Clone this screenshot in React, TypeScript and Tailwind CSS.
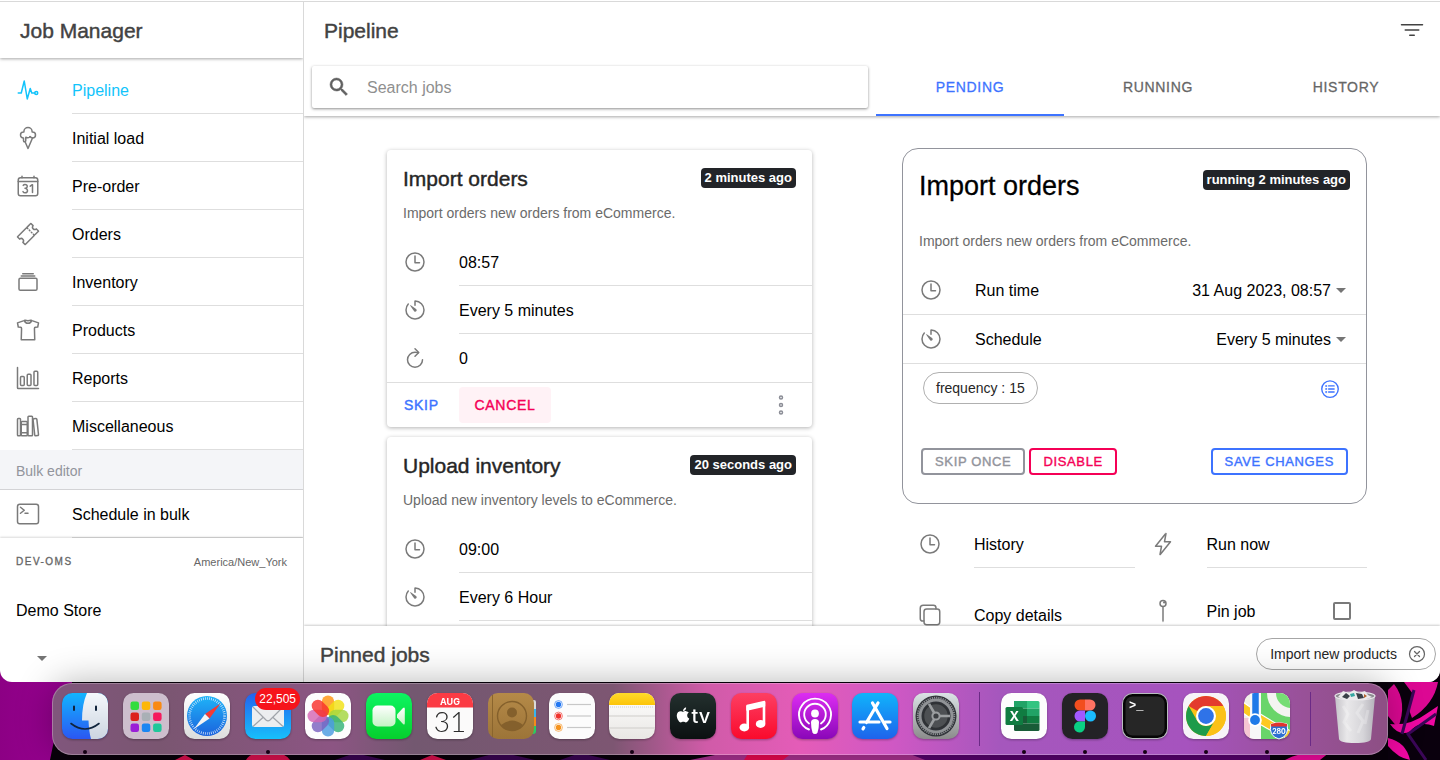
import type { ReactNode } from "react";
import type { IconType } from "react-icons";
import {
  IoAlbumsOutline,
  IoBarChartOutline,
  IoCalendarNumberOutline,
  IoCloseCircleOutline,
  IoCopyOutline,
  IoEllipsisVerticalOutline,
  IoFilterOutline,
  IoFlashOutline,
  IoIceCreamOutline,
  IoLibraryOutline,
  IoListCircleOutline,
  IoPinOutline,
  IoPulseOutline,
  IoRefreshOutline,
  IoShirtOutline,
  IoTerminalOutline,
  IoTicketOutline,
  IoTimeOutline,
  IoTimerOutline,
} from "react-icons/io5";
import { FaApple } from "react-icons/fa";

const navItems: { label: string; Icon: IconType; active?: boolean }[] = [
  { label: "Pipeline", Icon: IoPulseOutline, active: true },
  { label: "Initial load", Icon: IoIceCreamOutline },
  { label: "Pre-order", Icon: IoCalendarNumberOutline },
  { label: "Orders", Icon: IoTicketOutline },
  { label: "Inventory", Icon: IoAlbumsOutline },
  { label: "Products", Icon: IoShirtOutline },
  { label: "Reports", Icon: IoBarChartOutline },
  { label: "Miscellaneous", Icon: IoLibraryOutline },
];

function NavRow({ label, Icon, active }: { label: string; Icon: IconType; active?: boolean }) {
  return (
    <a
      href="#"
      className={active ? "flex h-12 shrink-0 items-center pl-4 text-[#12c4fb]" : "flex h-12 shrink-0 items-center pl-4 text-black"}
    >
      <Icon className={active ? "mr-8 size-6 shrink-0" : "mr-8 size-6 shrink-0 text-[#7a7a7a]"} />
      <span className="flex h-12 flex-1 items-center border-b border-[#dedede] pt-0.5">{label}</span>
    </a>
  );
}

function Caret() {
  return (
    <svg viewBox="0 0 10 5" className="pointer-events-none h-[5px] w-[10px] shrink-0 fill-[#757575]" aria-hidden="true">
      <path d="M0 0h10L5 5z" />
    </svg>
  );
}

function SearchIcon() {
  return (
    <svg viewBox="0 0 24 24" className="size-6 shrink-0 fill-[#616161] stroke-[#616161]" strokeWidth="0.500" aria-hidden="true">
      <path d="M15.500 14h-.79l-.28-.27A6.470 6.470 0 0 0 16 9.500 6.500 6.500 0 1 0 9.500 16c1.610 0 3.090-.59 4.230-1.570l.27.28v.79l5 4.990L20.490 19l-4.990-5zm-6 0C7.010 14 5 11.990 5 9.500S7.010 5 9.500 5 14 7.010 14 9.500 11.990 14 9.500 14z" />
    </svg>
  );
}

function Sidebar() {
  return (
    <aside className="flex w-[304px] shrink-0 flex-col overflow-hidden border-r border-[#d9d9d9]">
      <header className="z-10 flex h-14 shrink-0 items-center px-5 pt-0.5 shadow-[0_1px_3px_rgba(0,0,0,0.35)]">
        <h1 className="text-[21px] leading-6 text-[#424242] [-webkit-text-stroke:0.02em]">Job Manager</h1>
      </header>
      <nav className="flex min-h-0 flex-1 flex-col overflow-hidden pt-2">
        {navItems.map((item) => (
          <NavRow key={item.label} {...item} />
        ))}
        <h2 className="flex h-10 shrink-0 items-center border-b border-[#d3d3d6] bg-[#f4f5f8] px-4 pt-[3px] text-sm text-[#92949c]">
          Bulk editor
        </h2>
        <NavRow label="Schedule in bulk" Icon={IoTerminalOutline} />
      </nav>
      <footer className="h-36 shrink-0 shadow-[0_-1px_2px_rgba(0,0,0,0.15)]">
        <div className="flex h-12 items-center justify-between px-4 pb-0.5 text-[#666]">
          <span className="text-[10px] tracking-[0.15em] [-webkit-text-stroke:0.03em]">DEV-OMS</span>
          <span className="pt-0.5 text-[11px]">America/New_York</span>
        </div>
        <label htmlFor="store" className="flex h-12 items-center px-4 pt-0.5">
          Demo Store
        </label>
        <div className="flex h-12 items-center pl-4">
          <div className="flex items-center">
            <select id="store" defaultValue="" className="h-8 w-[21px] min-w-0 appearance-none bg-transparent outline-none">
              <option value=""></option>
            </select>
            <Caret />
          </div>
        </div>
      </footer>
    </aside>
  );
}

function PageHeader() {
  return (
    <header className="z-10 shrink-0 bg-white shadow-[0_1px_3px_rgba(0,0,0,0.35)]">
      <div className="flex h-14 items-center justify-between pr-4 pl-5">
        <h1 className="pt-0.5 text-[21px] leading-6 text-[#424242] [-webkit-text-stroke:0.02em]">Pipeline</h1>
        <button type="button" aria-label="Filter" className="text-[#424242]">
          <IoFilterOutline className="size-6" />
        </button>
      </div>
      <div className="grid grid-cols-[572fr_564fr]">
        <div className="p-2">
          <label className="flex h-[42px] items-center gap-4 rounded-xs bg-white pr-4 pl-[15px] shadow-[0_1px_3px_rgba(0,0,0,0.45)]">
            <SearchIcon />
            <input
              type="search"
              aria-label="Search jobs"
              placeholder="Search jobs"
              className="min-w-0 flex-1 bg-transparent pt-0.5 text-base outline-none placeholder:text-[#8f8f8f]"
            />
          </label>
        </div>
        <div role="tablist" className="grid grid-cols-3 text-sm tracking-wider [-webkit-text-stroke:0.02em]">
          <button type="button" role="tab" aria-selected="true" className="border-b-2 border-[#3d73ff] pt-0.5 text-[#3d73ff]">
            PENDING
          </button>
          <button type="button" role="tab" className="border-b-2 border-transparent pt-0.5 text-[#666]">
            RUNNING
          </button>
          <button type="button" role="tab" className="border-b-2 border-transparent pt-0.5 text-[#666]">
            HISTORY
          </button>
        </div>
      </div>
    </header>
  );
}

function Badge({ children }: { children: ReactNode }) {
  return (
    <span className="mt-px flex h-5 shrink-0 items-center rounded bg-[#222428] px-1 text-[13px] leading-4 font-bold text-white">
      {children}
    </span>
  );
}

function JobCard({ title, ago, text, time, schedule }: { title: string; ago: string; text: string; time: string; schedule: string }) {
  const rows = [
    { Icon: IoTimeOutline, value: time },
    { Icon: IoTimerOutline, value: schedule },
    { Icon: IoRefreshOutline, value: "0" },
  ];
  return (
    <article className="shrink-0 rounded bg-white shadow-[0_1px_4px_rgba(0,0,0,0.3)]">
      <div className="px-4 pt-[17px] pb-[15px]">
        <div className="flex items-start justify-between">
          <h2 className="text-[21px] leading-6 text-[#262626] [-webkit-text-stroke:0.02em]">{title}</h2>
          <Badge>{ago}</Badge>
        </div>
        <p className="mt-3 text-sm leading-5 text-[#6b6b6b]">{text}</p>
      </div>
      <ul>
        {rows.map(({ Icon, value }, i) => (
          <li key={i} className="flex h-12 items-center pl-4">
            <Icon className="mr-8 size-6 shrink-0 text-[#7a7a7a]" />
            <span
              className={i < 2 ? "flex h-12 flex-1 items-center border-b border-[#dedede] pt-0.5" : "flex h-12 flex-1 items-center pt-px"}
            >
              {value}
            </span>
          </li>
        ))}
      </ul>
      <div className="flex h-[45px] items-center border-t border-[#dedede] pr-[19px] pl-[17px] text-sm tracking-wider [-webkit-text-stroke:0.03em]">
        <button type="button" className="w-[55px] text-left text-[#3d73ff]">
          SKIP
        </button>
        <button type="button" className="h-9 w-[92px] rounded bg-[#fff2f6] text-[#f50056]">
          CANCEL
        </button>
        <button type="button" aria-label="More actions" className="ml-auto text-[#8b8d96]">
          <IoEllipsisVerticalOutline className="size-6" />
        </button>
      </div>
    </article>
  );
}

function SettingRow({ id, label, value, Icon }: { id: string; label: string; value: string; Icon: IconType }) {
  return (
    <div className="flex h-[49px] items-center border-b border-[#dedede] pr-5 pl-4">
      <Icon className="mr-8 size-6 shrink-0 text-[#7a7a7a]" />
      <label htmlFor={id} className="pt-0.5">
        {label}
      </label>
      <div className="ml-auto flex items-center gap-[5px]">
        <select id={id} defaultValue={value} className="appearance-none bg-transparent pt-0.5 text-right outline-none">
          <option>{value}</option>
        </select>
        <Caret />
      </div>
    </div>
  );
}

function JobDetail() {
  return (
    <section className="-mt-0.5 min-w-0">
      <div className="rounded-2xl border border-[#92949c] bg-white pb-7">
        <div className="flex items-start justify-between px-4 pt-5">
          <h2 className="text-[27px] leading-[34px] [-webkit-text-stroke:0.01em]">Import orders</h2>
          <Badge>running 2 minutes ago</Badge>
        </div>
        <p className="mt-7 mb-[15px] px-4 text-sm leading-5 text-[#6b6b6b]">Import orders new orders from eCommerce.</p>
        <SettingRow id="runtime" label="Run time" value="31 Aug 2023, 08:57" Icon={IoTimeOutline} />
        <SettingRow id="schedule" label="Schedule" value="Every 5 minutes" Icon={IoTimerOutline} />
        <div className="flex items-center justify-between py-2 pr-[25px] pl-5">
          <span className="flex h-8 items-center rounded-full border border-[#b0b0b0] px-3 text-sm text-[#262626]">frequency : 15</span>
          <button type="button" aria-label="Custom parameters" className="pt-0.5 text-[#3d73ff]">
            <IoListCircleOutline className="size-[22px]" />
          </button>
        </div>
        <div className="mt-9 flex gap-1 px-[18px] text-[13px] tracking-wider [-webkit-text-stroke:0.03em]">
          <button type="button" className="h-[27px] rounded border-2 border-[#92949c] px-3 text-[#92949c]">
            SKIP ONCE
          </button>
          <button type="button" className="h-[27px] rounded border-2 border-[#f50056] px-3 text-[#f50056]">
            DISABLE
          </button>
          <button type="button" className="ml-auto h-[27px] rounded border-2 border-[#3d73ff] px-3 text-[#3d73ff]">
            SAVE CHANGES
          </button>
        </div>
      </div>
      <div className="mt-4 grid grid-cols-2">
        <div className="flex flex-col gap-[23px]">
          <ActionRow label="History" Icon={IoTimeOutline} />
          <ActionRow label="Copy details" Icon={IoCopyOutline} />
        </div>
        <div className="flex flex-col gap-[19px]">
          <ActionRow label="Run now" Icon={IoFlashOutline} />
          <label className="flex h-12 items-center pr-4 pl-4">
            <IoPinOutline className="mr-8 size-6 shrink-0 text-[#7a7a7a]" />
            <span className="flex-1 pt-0.5">Pin job</span>
            <input type="checkbox" className="size-[18px] appearance-none rounded-xs border-2 border-[#7a7a7a]" />
          </label>
        </div>
      </div>
    </section>
  );
}

function ActionRow({ label, Icon }: { label: string; Icon: IconType }) {
  return (
    <button type="button" className="flex h-12 shrink-0 items-center pl-4 text-left">
      <Icon className="mr-8 size-6 shrink-0 text-[#7a7a7a]" />
      <span className="flex h-12 flex-1 items-center border-b border-[#dedede] pt-0.5">{label}</span>
    </button>
  );
}

function PinnedBar() {
  return (
    <footer className="z-10 flex h-14 shrink-0 items-center justify-between bg-white pr-1 pl-4 shadow-[0_-1px_2px_rgba(0,0,0,0.2)]">
      <h2 className="pt-0.5 text-[21px] leading-6 text-[#424242] [-webkit-text-stroke:0.02em]">Pinned jobs</h2>
      <span className="flex h-8 items-center gap-2.5 rounded-full border border-[#a6a6a6] pr-2 pl-[13px] text-sm text-[#262626]">
        Import new products
        <button type="button" aria-label="Remove">
          <IoCloseCircleOutline className="block size-5 text-[#666]" />
        </button>
      </span>
    </footer>
  );
}

/* ---------- Dock ---------- */

function Tile({ fill, children }: { fill: string; children?: ReactNode }) {
  return (
    <svg viewBox="0 0 48 48" className="block size-12 drop-shadow-[0_1px_1px_rgba(0,0,0,0.3)]" aria-hidden="true">
      <rect x="1" y="1" width="46" height="46" rx="10.5" fill={fill} />
      {children}
    </svg>
  );
}

function Gradient({ id, from, to }: { id: string; from: string; to: string }) {
  return (
    <linearGradient id={id} x1="0" y1="0" x2="0" y2="1">
      <stop offset="0" stopColor={from} />
      <stop offset="1" stopColor={to} />
    </linearGradient>
  );
}

function Finder() {
  return (
    <Tile fill="url(#finderL)">
      <Gradient id="finderL" from="#12b5ff" to="#2b57f2" />
      <Gradient id="finderR" from="#f4f8fc" to="#cdd5e0" />
      <path d="M26 1h10.500A10.500 10.500 0 0 1 47 11.500v25A10.500 10.500 0 0 1 36.500 47H30q-2-7-2.500-18.500h-6.500Q21 12 26 1z" fill="url(#finderR)" />
      <path d="M13 14.500v3.500M35 14.500v3.500" stroke="#10243c" strokeWidth="2" strokeLinecap="round" />
      <path d="M10 31.500q14 11 28 0" stroke="#10243c" strokeWidth="1.600" fill="none" strokeLinecap="round" />
    </Tile>
  );
}

const launchColors = ["#32dd3f", "#fdb70a", "#f98a14", "#dc221c", "#a9b0b6", "#f51a5e", "#9a1fd6", "#1b86f2", "#1fc79a"];

function Launchpad() {
  return (
    <Tile fill="#cdbecd">
      {launchColors.map((c, i) => (
        <rect key={c} x={8.5 + (i % 3) * 11.3} y={9.5 + Math.floor(i / 3) * 11} width="8.500" height="8.500" rx="2.200" fill={c} />
      ))}
    </Tile>
  );
}

function Safari() {
  return (
    <Tile fill="url(#safariBg)">
      <Gradient id="safariBg" from="#ffffff" to="#dcdcdc" />
      <Gradient id="safariDial" from="#1fb4f8" to="#1b62dd" />
      <circle cx="24" cy="24" r="20" fill="url(#safariDial)" />
      <circle cx="24" cy="24" r="17.500" fill="none" stroke="#fff" strokeWidth="2.600" strokeDasharray="0.700 1.350" opacity="0.850" />
      <path d="M37.500 11.500 22 22l4.500 4.500z" fill="#f23a35" />
      <path d="M11 37 22 22l4.500 4.500z" fill="#f4f4f4" />
    </Tile>
  );
}

function Mail() {
  return (
    <Tile fill="url(#mailBg)">
      <Gradient id="mailBg" from="#2462ee" to="#17c0fb" />
      <rect x="8" y="14" width="32" height="21" rx="2.500" fill="#eceef0" />
      <path d="m9 15 13 13q2 1.800 4 0l13-13M9 34.500l10.500-9.500M39 34.500 28.500 25" fill="none" stroke="#a0a4aa" strokeWidth="1.200" />
    </Tile>
  );
}

const petals = ["#ff9410", "#f2e014", "#a4d63e", "#34b277", "#4a9be0", "#7a62c0", "#d466b4", "#f8322c"];

function Photos() {
  return (
    <Tile fill="#fdfdfd">
      {petals.map((c, i) => (
        <rect
          key={c}
          x="17.800"
          y="3.500"
          width="12.400"
          height="19.500"
          rx="6.200"
          fill={c}
          opacity="0.820"
          transform={`rotate(${i * 45} 24 24)`}
        />
      ))}
    </Tile>
  );
}

function FaceTime() {
  return (
    <Tile fill="url(#ftBg)">
      <Gradient id="ftBg" from="#0cf562" to="#06cf2d" />
      <Gradient id="ftCam" from="#ffffff" to="#c4f3c4" />
      <rect x="7.500" y="13.500" width="23" height="21" rx="5" fill="url(#ftCam)" />
      <path d="m32 22.500 6-6.500q1.800-1.500 1.800 1v14q0 2.500-1.800 1L32 25.500z" fill="url(#ftCam)" />
    </Tile>
  );
}

function Calendar() {
  return (
    <Tile fill="#fbfafa">
      <path d="M1 15.500v-4A10.500 10.500 0 0 1 11.500 1h25A10.500 10.500 0 0 1 47 11.500v4z" fill="#fb3b44" />
      <text x="24" y="12.500" textAnchor="middle" fontSize="9" fontWeight="700" fill="#fff" fontFamily="Inter, sans-serif">
        AUG
      </text>
      <text x="24" y="40" textAnchor="middle" fontSize="28" fontWeight="300" fill="#2b2b2b" fontFamily="Lato, sans-serif">
        31
      </text>
    </Tile>
  );
}

function Contacts() {
  return (
    <svg viewBox="0 0 48 48" className="block size-12 overflow-visible" aria-hidden="true">
      <Gradient id="ctBg" from="#b58a48" to="#9c7438" />
      <path d="M40 8h7q2 0 2 2v7h-9z" fill="#dadada" />
      <path d="M40 17h9v8h-9z" fill="#38b5ee" />
      <path d="M40 25h9v9h-9z" fill="#f58a1c" />
      <path d="M40 34h9v5q0 3-3 3h-6z" fill="#27cf62" />
      <rect x="1" y="1" width="46" height="46" rx="10" fill="url(#ctBg)" />
      <path d="M5.500 3v42" stroke="#8a652e" strokeWidth="1" />
      <circle cx="25" cy="24" r="14.500" fill="none" stroke="#84602c" strokeWidth="1.400" />
      <circle cx="25" cy="20.500" r="5" fill="#84602c" />
      <path d="M14 33q11-9 22 0-4.500 5.500-11 5.500T14 33z" fill="#84602c" />
    </svg>
  );
}

function Reminders() {
  return (
    <Tile fill="#fcfcfc">
      {["#2478f2", "#f0332d", "#f5931e"].map((c, i) => (
        <g key={c}>
          <circle cx="10.500" cy={12.5 + i * 11.5} r="3.900" fill="none" stroke={c} strokeWidth="0.900" opacity="0.700" />
          <circle cx="10.500" cy={12.5 + i * 11.5} r="2.700" fill={c} />
          <path d={`M19 ${12.5 + i * 11.5}h24`} stroke="#c8c8c8" strokeWidth="1.200" />
        </g>
      ))}
    </Tile>
  );
}

function Notes() {
  return (
    <Tile fill="url(#notesBg)">
      <Gradient id="notesBg" from="#ffffff" to="#e9e7e4" />
      <Gradient id="notesTop" from="#ffdb2a" to="#fcc40a" />
      <path d="M1 13v-1.500A10.500 10.500 0 0 1 11.500 1h25A10.500 10.500 0 0 1 47 11.500V13z" fill="url(#notesTop)" />
      <path d="M1 24h46M1 36h46" stroke="#cfcdca" strokeWidth="1" />
      <path d="M2 15h44" stroke="#bbb" strokeWidth="0.800" strokeDasharray="0.800 1.200" />
    </Tile>
  );
}

function AppleTv() {
  return (
    <Tile fill="url(#tvBg)">
      <Gradient id="tvBg" from="#23302e" to="#0b1011" />
      <FaApple x="5.500" y="14.500" size={17} color="#fff" />
      <text x="22.500" y="31" fontSize="20" fontWeight="500" fill="#fff" fontFamily="Inter, sans-serif">
        tv
      </text>
    </Tile>
  );
}

function Music() {
  return (
    <Tile fill="url(#musicBg)">
      <Gradient id="musicBg" from="#fd3f63" to="#fa0a2c" />
      <path d="M17 13.500 34.500 9.500v4.500L17 18z" fill="#fff" stroke="#fff" strokeWidth="1.500" strokeLinejoin="round" />
      <path d="M17.700 14v21M34 10v21.500" stroke="#fff" strokeWidth="2.600" />
      <ellipse cx="14.300" cy="35.500" rx="4.800" ry="3.900" fill="#fff" />
      <ellipse cx="30.600" cy="32" rx="4.800" ry="3.900" fill="#fff" />
    </Tile>
  );
}

function Podcasts() {
  return (
    <Tile fill="url(#podBg)">
      <Gradient id="podBg" from="#dd2df2" to="#8a07b8" />
      <g fill="none" stroke="#fff" strokeLinecap="round">
        <path d="M18 37.500a16 16 0 1 1 12 0" strokeWidth="1.900" />
        <path d="M18 31.500a10.800 10.800 0 1 1 12 0" strokeWidth="1.900" />
      </g>
      <circle cx="24" cy="21.500" r="3.900" fill="#fff" />
      <path d="M24 27q4 0 4 3.500 0 5-1.500 10-.7 1.500-2.500 1.500t-2.500-1.500Q20 35.500 20 30.500 20 27 24 27z" fill="#fff" />
    </Tile>
  );
}

function AppStore() {
  return (
    <Tile fill="url(#storeBg)">
      <Gradient id="storeBg" from="#10b4fb" to="#1e63ec" />
      <path
        d="m27 11-11.500 19.500M12.800 35.500l-.8 1.300M21.500 11 36 36.500M9 30h19M34 30h5"
        stroke="#fff"
        strokeWidth="3.200"
        strokeLinecap="round"
      />
    </Tile>
  );
}

function Settings() {
  return (
    <Tile fill="url(#setBg)">
      <Gradient id="setBg" from="#dbe4e6" to="#8b8b8b" />
      <circle cx="24" cy="24" r="20.500" fill="#303338" />
      <circle cx="24" cy="24" r="16" fill="none" stroke="#909396" strokeWidth="3" />
      <circle cx="24" cy="24" r="18.300" fill="none" stroke="#909396" strokeWidth="1.800" strokeDasharray="1.200 1" />
      <circle cx="24" cy="24" r="12.500" fill="#4d5053" stroke="#2f3235" strokeWidth="1.500" />
      <path d="M24 24h14M24 24l-7-12.100M24 24l-7 12.100" stroke="#9b9ea0" strokeWidth="2.600" />
      <circle cx="24" cy="24" r="3.600" fill="#3c3f42" stroke="#9b9ea0" strokeWidth="2" />
    </Tile>
  );
}

function Excel() {
  return (
    <Tile fill="#fdfdfd">
      <path d="M14 9h13v7.500H14z" fill="#21a366" />
      <path d="M27 9h11q1.500 0 1.500 1.500v6H27z" fill="#33c481" />
      <path d="M14 16.500h13V24H14z" fill="#107c41" />
      <path d="M27 16.500h12.500V24H27z" fill="#21a366" />
      <path d="M14 24h13v7.500H14z" fill="#185c37" />
      <path d="M27 24h12.500v7.500H27z" fill="#107c41" />
      <path d="M14 31.500h25.500v6q0 1.500-1.500 1.500H15.500Q14 39 14 37.500z" fill="#185c37" />
      <rect x="5.500" y="15" width="17.500" height="18" rx="1.500" fill="#107c41" />
      <text x="14.200" y="28.500" textAnchor="middle" fontSize="13" fontWeight="700" fill="#fff" fontFamily="Inter, sans-serif">
        X
      </text>
    </Tile>
  );
}

function Figma() {
  return (
    <Tile fill="#242226">
      <path d="M24 7.500h-5a5.500 5.500 0 0 0 0 11h5z" fill="#f24e1e" />
      <path d="M24 7.500h5a5.500 5.500 0 0 1 0 11h-5z" fill="#ff7262" />
      <path d="M24 18.500h-5a5.500 5.500 0 0 0 0 11h5z" fill="#a259ff" />
      <circle cx="29.500" cy="24" r="5.500" fill="#1abcfe" />
      <path d="M24 29.500h-5a5.500 5.500 0 1 0 5 5.500z" fill="#0acf83" />
    </Tile>
  );
}

function Terminal() {
  return (
    <Tile fill="#b9bdbf">
      <rect x="2" y="2" width="44" height="44" rx="9.500" fill="#050505" />
      <rect x="4.500" y="4.500" width="39" height="39" rx="7" fill="#262626" />
      <text x="8" y="17" fontSize="12" fontWeight="700" fill="#fff" fontFamily="Liberation Mono, monospace">
        &gt;_
      </text>
    </Tile>
  );
}

function Chrome() {
  return (
    <Tile fill="#f7f3f8">
      <circle cx="24" cy="24" r="20" fill="#fbc116" />
      <path d="M6.700 14A20 20 0 0 1 41.300 14H24a10 10 0 0 0-8.700 5z" fill="#e33b2e" />
      <path d="M6.700 14A20 20 0 0 0 24 44l8.700-15A10 10 0 0 1 15.300 29z" fill="#1e9b4a" />
      <path d="M24 14h17.300A20 20 0 0 1 24 44l8.700-15A10 10 0 0 0 24 14z" fill="#fbc116" />
      <circle cx="24" cy="24" r="10" fill="#fff" />
      <circle cx="24" cy="24" r="7.900" fill="#2f73e8" />
    </Tile>
  );
}

function Maps() {
  return (
    <Tile fill="#f1efe9">
      <clipPath id="mapClip">
        <rect x="1" y="1" width="46" height="46" rx="10.500" />
      </clipPath>
      <g clipPath="url(#mapClip)">
        <path d="M18 0h30v48H18z" fill="#69d56a" />
        <circle cx="48" cy="1" r="24" fill="#f4f4f1" />
        <circle cx="48" cy="1" r="15" fill="#76dd74" />
        <path d="M0 26h12v22H0z" fill="#f6c6d2" />
        <path d="M0 10q24 18 50 30v9q-30-13-50-28z" fill="#fcc922" stroke="#fff" strokeWidth="1.200" />
        <path d="M12.500 0v48" stroke="#f8f8f8" strokeWidth="11" />
        <path d="M12.500 0v28" stroke="#1f7ae8" strokeWidth="6.500" />
        <path d="M18 34 30 48H18z" fill="#69d56a" />
      </g>
      <circle cx="12" cy="28" r="6.800" fill="#fff" />
      <circle cx="12" cy="28" r="4.900" fill="#1f7ae8" />
      <path d="M28 32q8-3 16 0 3 12-8 15-11-3-8-15z" fill="#2d6fd0" stroke="#fff" strokeWidth="1" />
      <path d="M28 34.500v-2.500q8-3 16 0v2.500z" fill="#e2342e" />
      <text x="36" y="42" textAnchor="middle" fontSize="7" fontWeight="700" fill="#fff" fontFamily="Inter, sans-serif">
        280
      </text>
    </Tile>
  );
}

function Trash() {
  return (
    <svg viewBox="0 0 48 56" className="block h-14 w-12" aria-hidden="true">
      <linearGradient id="trashBg">
        <stop offset="0" stopColor="#c4c2c8" />
        <stop offset="0.300" stopColor="#e9e8ea" />
        <stop offset="0.700" stopColor="#d6d5d9" />
        <stop offset="1" stopColor="#b5b2ba" />
      </linearGradient>
      <path d="M4 8h40l-4 43q-1 4-16 4T8 51z" fill="url(#trashBg)" />
      <ellipse cx="24" cy="8" rx="20" ry="4" fill="#8d8b90" stroke="#e8e6ea" strokeWidth="1.200" />
      <path d="m7 9 5-6 6 2 5-3 5 3 6-2 3 4 4 2-8 3H14z" fill="#eceaec" />
      <path d="m11 9 4-4 4 3-3 3zM25 5l6 1 2 4-6 1z" fill="#3a4148" />
      <path d="m19 6 4-1 1 3-4 1z" fill="#35a6a0" />
      <path d="m33 6 3 2-3 2z" fill="#b4642f" />
      <path d="m12 18 5 8-4 8 7 9M32 16l-6 9 6 8-5 12M37 22l-3 14" stroke="#fff" strokeWidth="3" opacity="0.250" fill="none" />
    </svg>
  );
}

const mainApps: { name: string; Icon: () => ReactNode; running?: boolean; badge?: string }[] = [
  { name: "Finder", Icon: Finder, running: true },
  { name: "Launchpad", Icon: Launchpad },
  { name: "Safari", Icon: Safari },
  { name: "Mail", Icon: Mail, running: true, badge: "22,505" },
  { name: "Photos", Icon: Photos },
  { name: "FaceTime", Icon: FaceTime },
  { name: "Calendar", Icon: Calendar },
  { name: "Contacts", Icon: Contacts },
  { name: "Reminders", Icon: Reminders },
  { name: "Notes", Icon: Notes, running: true },
  { name: "TV", Icon: AppleTv },
  { name: "Music", Icon: Music },
  { name: "Podcasts", Icon: Podcasts },
  { name: "App Store", Icon: AppStore },
  { name: "System Settings", Icon: Settings },
];

const otherApps = [
  { name: "Excel", Icon: Excel, running: true },
  { name: "Figma", Icon: Figma, running: true },
  { name: "Terminal", Icon: Terminal, running: true },
  { name: "Chrome", Icon: Chrome, running: true },
  { name: "Maps", Icon: Maps, running: true },
];

function DockApp({ name, Icon, running, badge }: { name: string; Icon: () => ReactNode; running?: boolean; badge?: string }) {
  return (
    <button type="button" aria-label={name} className="relative flex min-w-0 flex-1 flex-col items-center justify-between pt-2">
      <Icon />
      {badge && (
        <span className="absolute top-1 left-[18px] flex h-[22px] items-center rounded-full bg-[#f6141b] px-1 text-xs text-white">
          {badge}
        </span>
      )}
      <span className={running ? "size-1 rounded-full bg-[#150014]" : "size-1"} />
    </button>
  );
}

function DockDivider() {
  return (
    <div className="flex w-[27px] shrink-0 justify-center py-2">
      <div className="w-px bg-[#6b2a86]" />
    </div>
  );
}

function Dock() {
  return (
    <div className="relative mx-[52px] flex h-[72px] rounded-[20px] border border-white/25 bg-[linear-gradient(90deg,#80567c_0%,#7a5671_8%,#8c5583_21%,#735870_27%,#7d5672_42%,#d05ba8_49%,#e45cb8_56%,#cf58c4_63%,#a557bd_71%,#a653be_85%,#985197_94%,#8d4f84_100%)] px-0.5 shadow-[0_0_36px_rgba(0,0,0,0.3)]">
      {mainApps.map((app) => (
        <DockApp key={app.name} {...app} />
      ))}
      <DockDivider />
      {otherApps.map((app) => (
        <DockApp key={app.name} {...app} />
      ))}
      <DockDivider />
      <button type="button" aria-label="Trash" className="flex min-w-0 flex-1 justify-center pt-1">
        <Trash />
      </button>
    </div>
  );
}

function Wallpaper() {
  return (
    <svg viewBox="0 0 1440 92" preserveAspectRatio="none" className="absolute inset-x-0 bottom-0 h-[92px] w-full" aria-hidden="true">
      <linearGradient id="wall">
        <stop offset="0" stopColor="#8c0084" />
        <stop offset="1" stopColor="#9b0094" />
      </linearGradient>
      <path d="M0 0h1440v92H0z" fill="#08000a" />
      <path d="M0 0h78Q60 40 50 92H0z" fill="url(#wall)" />
      <path d="M246 92q4-8 22-7 14-3 22 7zM420 92l12-5 14 5zM175 92l10-5 9 5z" fill="#d9114e" />
      <path d="M470 92l30-8 35 8zM560 92l20-7 30 7zM335 92l20-7 30 7z" fill="#3a0552" />
      <path d="M690 92l40-8h200v8z" fill="#a8318f" />
      <path d="M744 92l5-8h44l-10 8z" fill="#e8094f" />
      <path d="M905 84h365v8H925z" fill="#56036c" />
      <path d="M1285 92q15-9 45-8l-10 8z" fill="#ee0a9c" />
      <path d="M1388 14h52v78h-52z" fill="#0a000d" />
      <path d="M1394 16q14 18 4 44l-10-12V22zM1404 14h34q-4 22-26 36-6-12 1-24z" fill="#dc0893" />
      <path d="M1390 56q20 2 36-10l12-8-4 20q-16-6-24 6-12 4-20-8zM1388 70q18 4 22 22-12-2-22-14z" fill="#f008a2" />
      <path d="M1414 22l-12 44M1436 46l-28 20 18 26" stroke="#3b0758" strokeWidth="3" fill="none" />
    </svg>
  );
}

export default function App() {
  return (
    <div className="relative flex h-screen flex-col overflow-hidden bg-[#08000a] text-base text-black [font-family:'Liberation_Sans',Arial,sans-serif]">
      <Wallpaper />
      <div className="relative isolate flex min-h-0 flex-1 flex-col overflow-hidden rounded-b-xl bg-white pt-px">
        <div className="flex min-h-0 flex-1 border-t border-[#d9d9d9]">
          <Sidebar />
          <main className="flex min-w-0 flex-1 flex-col overflow-hidden">
            <PageHeader />
            <div className="flex min-h-0 flex-1 justify-center overflow-hidden pt-[34px]">
              <div className="grid w-full max-w-[990px] grid-cols-[425fr_465fr] gap-x-[90px] pl-[10px]">
                <section className="flex min-w-0 flex-col gap-[10px]">
                  <JobCard
                    title="Import orders"
                    ago="2 minutes ago"
                    text="Import orders new orders from eCommerce."
                    time="08:57"
                    schedule="Every 5 minutes"
                  />
                  <JobCard
                    title="Upload inventory"
                    ago="20 seconds ago"
                    text="Upload new inventory levels to eCommerce."
                    time="09:00"
                    schedule="Every 6 Hour"
                  />
                </section>
                <JobDetail />
              </div>
            </div>
            <PinnedBar />
          </main>
        </div>
      </div>
      <div className="relative z-10 h-[78px] shrink-0 pt-px">
        <Dock />
      </div>
    </div>
  );
}
